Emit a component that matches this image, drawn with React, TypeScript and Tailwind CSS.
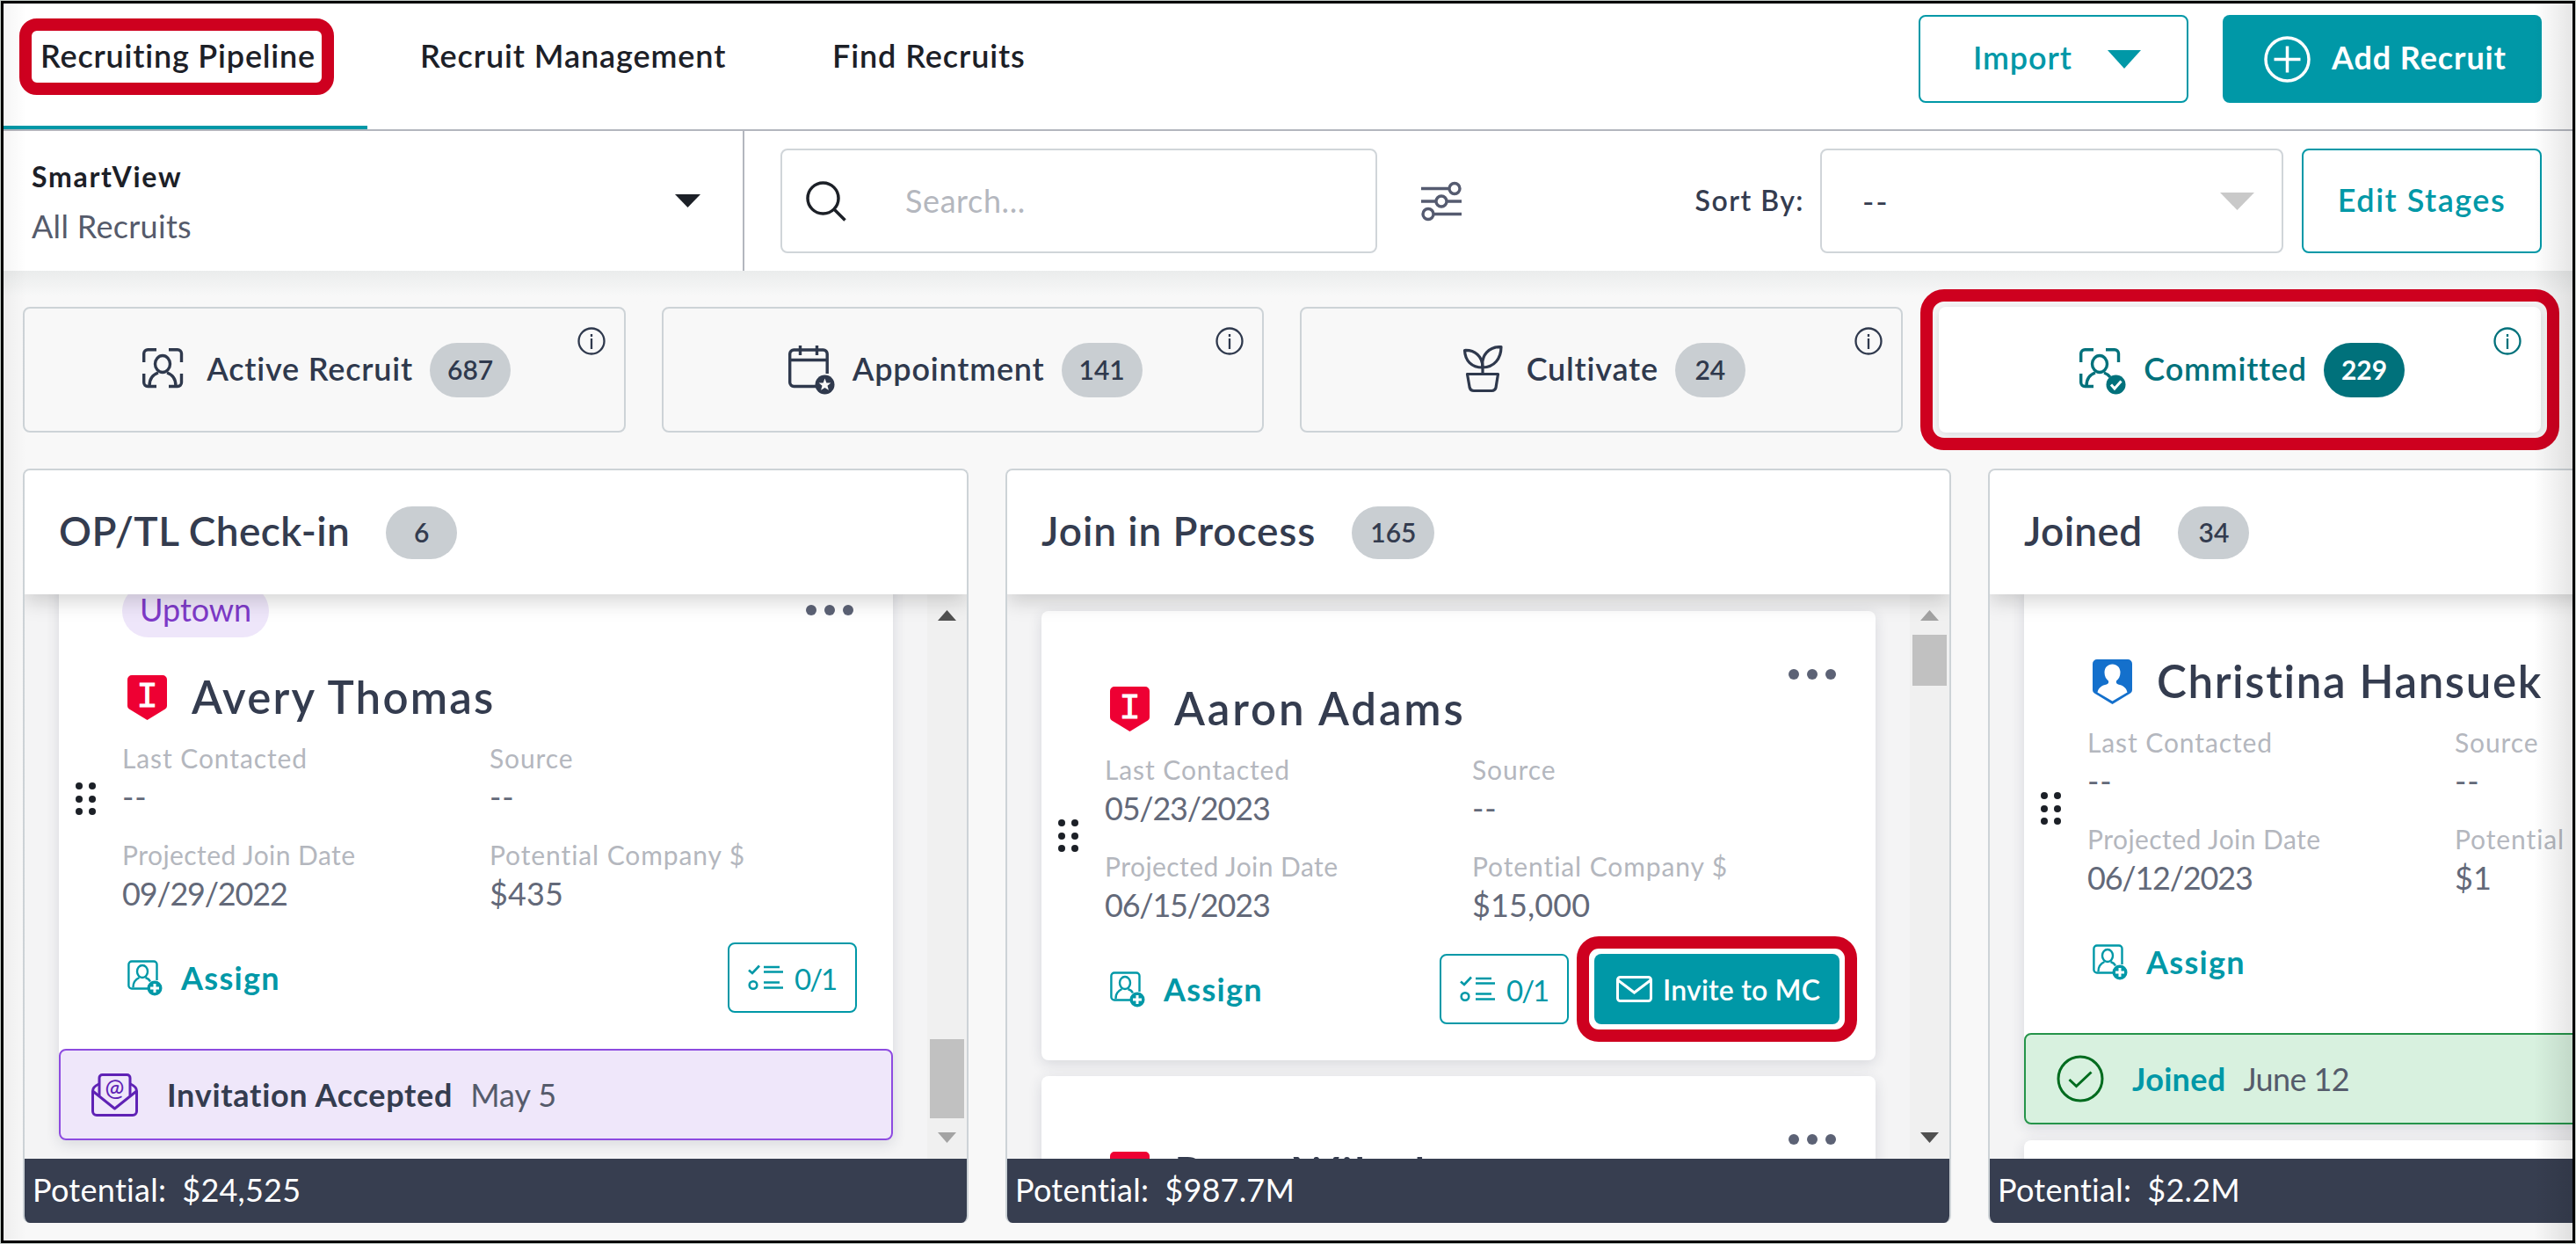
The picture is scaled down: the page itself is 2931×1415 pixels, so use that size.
import type { ReactNode } from "react";
import clsx from "clsx";

interface Recruit {
    name: string;
    nameClass: string;
    kind: "internal" | "contact";
    tag?: string;
    lastContacted: string;
    source: string;
    joinDate: string;
    potential: string;
    checklist?: string;
    canInvite?: boolean;
    status?: "accepted" | "joined";
    statusDate?: string;
}

interface ColumnData {
    title: string;
    titleClass: string;
    count: number;
    total: string;
    listClass: string;
    scroll: "top" | "bottom";
    recruits: Recruit[];
}

const columns: ColumnData[] = [
    {
        title: "OP/TL Check-in",
        titleClass: "tracking-[0.4px]",
        count: 6,
        total: "$24,525",
        listClass: "-mt-[52px]",
        scroll: "bottom",
        recruits: [
            {
                name: "Avery Thomas",
                nameClass: "tracking-[2.2px]",
                kind: "internal",
                tag: "Uptown",
                lastContacted: "--",
                source: "--",
                joinDate: "09/29/2022",
                potential: "$435",
                checklist: "0/1",
                status: "accepted",
                statusDate: "May 5",
            },
        ],
    },
    {
        title: "Join in Process",
        titleClass: "tracking-[0.9px]",
        count: 165,
        total: "$987.7M",
        listClass: "mt-[19px]",
        scroll: "top",
        recruits: [
            {
                name: "Aaron Adams",
                nameClass: "tracking-[2.8px]",
                kind: "internal",
                lastContacted: "05/23/2023",
                source: "--",
                joinDate: "06/15/2023",
                potential: "$15,000",
                checklist: "0/1",
                canInvite: true,
            },
            {
                name: "Ryan Wilsek",
                nameClass: "tracking-[2.2px]",
                kind: "internal",
                lastContacted: "--",
                source: "--",
                joinDate: "--",
                potential: "--",
            },
        ],
    },
    {
        title: "Joined",
        titleClass: "tracking-[0.3px]",
        count: 34,
        total: "$2.2M",
        listClass: "-mt-[12px]",
        scroll: "top",
        recruits: [
            {
                name: "Christina Hansuek",
                nameClass: "tracking-[1.6px]",
                kind: "contact",
                lastContacted: "--",
                source: "--",
                joinDate: "06/12/2023",
                potential: "$1",
                status: "joined",
                statusDate: "June 12",
            },
            {
                name: "Ryan Wilsek",
                nameClass: "tracking-[2.2px]",
                kind: "contact",
                lastContacted: "--",
                source: "--",
                joinDate: "--",
                potential: "--",
            },
        ],
    },
];

function Caret({ className }: { className?: string }) {
    return (
        <svg viewBox="0 0 38 20" preserveAspectRatio="none" className={className}>
            <path d="M0 0H38L19 20Z" fill="currentColor" />
        </svg>
    );
}

function Highlight({ className }: { className: string }) {
    return <div className={clsx("pointer-events-none absolute z-20 border-[14px] border-[#ce001f]", className)} />;
}

function PersonShape() {
    return (
        <>
            <ellipse cx="23" cy="21" rx="8.5" ry="9.5" />
            <path d="M8 46C8 37 12 33 18 31M28 31C34 33 38 37 38 46" />
        </>
    );
}

function ActiveIcon() {
    return (
        <svg viewBox="0 0 53 56" className="h-[56px] w-[53px]" fill="none" stroke="currentColor" strokeWidth="3.4">
            <path d="M1.7 19V9A4.5 4.5 0 0 1 6.2 4.7H16M30 4.7H40A4.5 4.5 0 0 1 44.5 9V19M1.7 32V42A4.5 4.5 0 0 0 6.2 46.5H16M30 46.5H40A4.5 4.5 0 0 0 44.5 42V32" />
            <PersonShape />
        </svg>
    );
}

function CalendarIcon() {
    return (
        <svg viewBox="0 0 53 56" className="h-[56px] w-[53px]" fill="none" stroke="currentColor" strokeWidth="3.4">
            <path d="M32 46.5H6.5A4.5 4.5 0 0 1 1.7 42V9.5A4.5 4.5 0 0 1 6.5 5H39.5A4.5 4.5 0 0 1 44.2 9.5V32M1.7 16.5H44.2M13.5 0V11M32.5 0V11" />
            <circle cx="41.5" cy="44.5" r="11" fill="currentColor" stroke="none" />
            <path
                d="M41.5 37.5L43.4 42.4L48.4 42.6L44.5 45.8L45.9 50.8L41.5 48L37.1 50.8L38.5 45.8L34.6 42.6L39.6 42.4Z"
                fill="#f8f8f8"
                stroke="none"
            />
        </svg>
    );
}

function PlantIcon() {
    return (
        <svg viewBox="-1 0 53 56" className="h-[56px] w-[53px]" fill="none" stroke="currentColor" strokeWidth="3.2" strokeLinejoin="round">
            <path d="M22 25C9 25 2 17 1.5 5.5C13 5 22 12 22 25Z" />
            <path d="M22 25C20 11 29 1 43 1.6C43 15 35 25 22 25ZM22 24V32" />
            <path d="M4.5 32.5H39.5L37 48A5 5 0 0 1 32.5 51.5H12A5 5 0 0 1 7.2 48Z" />
        </svg>
    );
}

function CommittedIcon() {
    return (
        <svg viewBox="0 0 53 56" className="h-[56px] w-[53px]" fill="none" stroke="currentColor" strokeWidth="3.4">
            <path d="M1.7 19V9A4.5 4.5 0 0 1 6.2 4.7H16M30 4.7H40A4.5 4.5 0 0 1 44.5 9V19M1.7 32V42A4.5 4.5 0 0 0 6.2 46.5H16" />
            <ellipse cx="23" cy="21" rx="8.5" ry="9.5" />
            <path d="M8 46C8 37 12 33 18 31M28 31C31 32 33 33.5 35 36" />
            <circle cx="41.5" cy="44.5" r="11" fill="currentColor" stroke="none" />
            <path d="M36 44.5L40 49L47.5 40.5" stroke="#fff" strokeWidth="3" />
        </svg>
    );
}

function InfoIcon() {
    return (
        <svg viewBox="0 0 32 32" className="h-8 w-8" fill="none" stroke="currentColor" strokeWidth="2.3">
            <circle cx="16" cy="16" r="14.5" />
            <path d="M16 13V25M16 8V11" />
        </svg>
    );
}

function AssignIcon() {
    return (
        <svg viewBox="0 0 40 41" className="h-[41px] w-[40px]" fill="none" stroke="currentColor" strokeWidth="2.4">
            <path d="M24 32.5H5A3.5 3.5 0 0 1 1.4 29V5A3.5 3.5 0 0 1 5 1.5H30A3.5 3.5 0 0 1 33.5 5V23" />
            <ellipse cx="17" cy="13" rx="6" ry="7" />
            <path d="M6.5 31C6.5 25 9 22 13.5 20M20.5 20C23.5 21 25 22.5 26 24.5" />
            <circle cx="31" cy="32" r="8.5" fill="currentColor" stroke="none" />
            <path d="M31 27V37M26 32H36" stroke="#fff" strokeWidth="3" />
        </svg>
    );
}

function ChecklistIcon() {
    return (
        <svg viewBox="0 0 40 30" className="h-[30px] w-[40px]" fill="none" stroke="currentColor" strokeWidth="2.6">
            <path d="M1 6.5L5 10L13 1.5M18 3H36M18 8.5H40M18 20.5H36M18 26.5H40" />
            <circle cx="6" cy="23.5" r="4.3" />
        </svg>
    );
}

function MailIcon() {
    return (
        <svg viewBox="0 0 41 30" className="h-[30px] w-[41px]" fill="none" stroke="currentColor" strokeWidth="3">
            <rect x="1.5" y="1.5" width="38" height="27" rx="3" />
            <path d="M2 5L20.5 19L39 5" />
        </svg>
    );
}

function OpenMailIcon() {
    return (
        <svg viewBox="0 0 53 49" className="h-[49px] w-[53px] text-[#5f22b5]" fill="none" stroke="currentColor" strokeWidth="3" strokeLinejoin="round">
            <path d="M9 25V5A3.5 3.5 0 0 1 12.5 1.5H40.5A3.5 3.5 0 0 1 44 5V25" />
            <path d="M8.5 12C4 14 1.5 16 1.5 20V43A4.5 4.5 0 0 0 6 47.5H47A4.5 4.5 0 0 0 51.5 43V20C51.5 16 49 14 44.5 12" />
            <path d="M1.5 20L26.5 40L51.5 20" />
            <text x="26.5" y="25.5" textAnchor="middle" fontFamily="Lato" fontSize="26" fontWeight="500" fill="currentColor" stroke="none">
                @
            </text>
        </svg>
    );
}

function JoinedIcon() {
    return (
        <svg viewBox="0 0 54 54" className="h-[54px] w-[54px] text-[#006b1e]" fill="none" stroke="currentColor" strokeWidth="3">
            <circle cx="27" cy="27" r="25" />
            <path d="M14.5 28L22.5 35.5L39.5 19.5" />
        </svg>
    );
}

function Shield({ kind }: { kind: Recruit["kind"] }) {
    return (
        <svg viewBox="0 0 45 51" className="h-[51px] w-[45px] shrink-0">
            <path
                d="M5 0H40A5 5 0 0 1 45 5V35A4 4 0 0 1 43 38.5L22.5 51L2 38.5A4 4 0 0 1 0 35V5A5 5 0 0 1 5 0Z"
                fill={kind === "internal" ? "#ee0033" : "#1470cc"}
            />
            {kind === "internal" ? (
                <text x="22.5" y="36" textAnchor="middle" fontFamily="Liberation Mono" fontSize="41" fontWeight="400" fill="#fff" stroke="#fff" strokeWidth="0.8">
                    I
                </text>
            ) : (
                <path
                    d="M22.5 5.500C28 5.500 31.500 9.500 31.500 15C31.500 19.500 29.500 22.500 27 24.500C26.500 27.500 27.500 28 31 29C36 30.500 38.500 33 39.500 37.500L22.500 47.500L5.500 37.500C6.500 33 9 30.500 14 29C17.500 28 18.500 27.500 18 24.500C15.500 22.500 13.500 19.500 13.500 15C13.500 9.500 17 5.500 22.500 5.500Z"
                    fill="#fff"
                />
            )}
        </svg>
    );
}

function StageTile({ icon, label, count, active }: { icon: ReactNode; label: string; count: number; active?: boolean }) {
    return (
        <div
            className={clsx(
                "relative flex h-[143px] items-center justify-center rounded-lg pl-[6px]",
                active
                    ? "bg-white text-[#00717b] shadow-[0_2px_12px_rgba(30,40,60,0.16)]"
                    : "border-2 border-[#cdd3d7] bg-[#f8f8f8] text-[#2f394d]"
            )}
        >
            {icon}
            <span className="ml-[20px] pb-[3px] text-[36px] leading-[44px] font-semibold tracking-[0.8px] whitespace-nowrap">{label}</span>
            <span
                className={clsx(
                    "ml-[19px] flex h-[62px] min-w-[80px] items-center justify-center rounded-full px-[20px] pb-[2px] text-[30px] leading-[40px]",
                    active ? "bg-[#00717b] font-bold text-white" : "bg-[#c9ced2] font-semibold"
                )}
            >
                {count}
            </span>
            <span className={clsx("absolute", active ? "top-[23px] right-[22px]" : "top-[21px] right-[21px]")}>
                <InfoIcon />
            </span>
            {active && <Highlight className="-inset-x-[21px] -inset-y-[20px] rounded-[27px]" />}
        </div>
    );
}

function Field({ label, value, isDate }: { label: string; value: string; isDate?: boolean }) {
    return (
        <div className="whitespace-nowrap">
            <div
                className={clsx(
                    "text-[30px] leading-[40px] text-[#b4b7be]",
                    label === "Projected Join Date" ? "tracking-[0.450px]" : "tracking-[0.9px]"
                )}
            >
                {label}
            </div>
            <div
                className={clsx(
                    "mt-[2px] text-[36px] leading-[44px] text-[#636979]",
                    value === "--" ? "tracking-[1px]" : isDate ? "tracking-[-1.2px]" : "tracking-[0.1px]"
                )}
            >
                {value}
            </div>
        </div>
    );
}

function StatusBanner({ status, date }: { status: "accepted" | "joined"; date?: string }) {
    const accepted = status === "accepted";
    return (
        <div
            className={clsx(
                "flex h-[104px] items-center rounded-lg border-[2.5px] pl-[35px] text-[36px] leading-[44px] whitespace-nowrap",
                accepted ? "border-[#8d4be0] bg-[#efe7fa]" : "border-[#25944a] bg-[#d8f1df]"
            )}
        >
            {accepted ? <OpenMailIcon /> : <JoinedIcon />}
            <span
                className={clsx(
                    "font-bold",
                    accepted ? "ml-[33px] tracking-[0.7px] text-[#343c4f]" : "ml-[32px] tracking-[0.3px] text-[#0098a7]"
                )}
            >
                {accepted ? "Invitation Accepted" : "Joined"}
            </span>
            <span className={clsx("ml-[20px] text-[#555b6b]", !accepted && "tracking-[-0.600px]")}>{date}</span>
        </div>
    );
}

function RecruitCard({ recruit }: { recruit: Recruit }) {
    return (
        <div className="shrink-0 rounded-lg bg-white shadow-[0_4px_16px_rgba(40,50,80,0.14)]">
            <div className="flex">
                <div className="flex w-[72px] items-center pl-[19px]">
                    <div className="grid grid-cols-2 gap-x-[7px] gap-y-[6.5px]">
                        {[0, 1, 2, 3, 4, 5].map((dot) => (
                            <span key={dot} className="h-[8px] w-[8px] rounded-full bg-[#1c2027]" />
                        ))}
                    </div>
                </div>
                <div className="flex-1 pt-[41px] pr-[41px] pb-[41px]">
                    <div className="flex justify-between">
                        <div>
                            {recruit.tag && (
                                <div className="flex h-[60px] w-fit items-center rounded-full bg-[#eee6fa] px-[20px] pb-[4px] text-[36px] leading-[44px] text-[#7e3ac8]">
                                    {recruit.tag}
                                </div>
                            )}
                            <div className={clsx("flex h-[56px] items-center pl-[6px]", recruit.tag ? "mt-[40px]" : "mt-[42px]")}>
                                <Shield kind={recruit.kind} />
                                <span
                                    className={clsx(
                                        "ml-[28px] text-[51px] leading-[56px] font-semibold whitespace-nowrap text-[#343c4f]",
                                        recruit.nameClass
                                    )}
                                >
                                    {recruit.name}
                                </span>
                            </div>
                        </div>
                        <div className={clsx("mr-[4px] flex h-[12px] gap-[9px]", recruit.tag ? "mt-[23px]" : "mt-[25px]")}>
                            <span className="h-[12px] w-[12px] rounded-full bg-[#5c6275]" />
                            <span className="h-[12px] w-[12px] rounded-full bg-[#5c6275]" />
                            <span className="h-[12px] w-[12px] rounded-full bg-[#5c6275]" />
                        </div>
                    </div>
                    <div className="mt-[21px] grid grid-cols-[418px_1fr] gap-y-[24px]">
                        <Field label="Last Contacted" value={recruit.lastContacted} isDate />
                        <Field label="Source" value={recruit.source} />
                        <Field label="Projected Join Date" value={recruit.joinDate} isDate />
                        <Field label="Potential Company $" value={recruit.potential} />
                    </div>
                    <div className="mt-[34px] flex h-[80px] items-center pl-[6px] text-[#0098a7]">
                        <AssignIcon />
                        <span className="ml-[21px] text-[36px] leading-[44px] font-bold tracking-[1.3px]">Assign</span>
                        <div className="ml-auto flex gap-[29px]">
                            {recruit.checklist && (
                                <div className="flex h-[80px] w-[147px] items-center rounded-lg border-2 border-[#0098a7] pl-[21px]">
                                    <ChecklistIcon />
                                    <span className="ml-[13px] pt-[2px] text-[33px] leading-[40px] tracking-[-2px]">{recruit.checklist}</span>
                                </div>
                            )}
                            {recruit.canInvite && (
                                <div className="relative flex h-[80px] w-[279px] items-center rounded-lg bg-[#0098a7] pl-[25px] text-white">
                                    <MailIcon />
                                    <span className="ml-[12px] pt-[2px] text-[32px] leading-[40px] font-semibold tracking-[0.2px] whitespace-nowrap">
                                        Invite to MC
                                    </span>
                                    <Highlight className="-inset-5 rounded-[25px]" />
                                </div>
                            )}
                        </div>
                    </div>
                </div>
            </div>
            {recruit.status && <StatusBanner status={recruit.status} date={recruit.statusDate} />}
        </div>
    );
}

function ScrollBar({ position }: { position: "top" | "bottom" }) {
    const atTop = position === "top";
    return (
        <div className="flex w-[45px] flex-col items-center bg-[#f0f0f0] pt-[18px] pb-[18px]">
            <Caret className={clsx("h-[12px] w-[21px] rotate-180", atTop ? "text-[#a3a3a3]" : "text-[#505050]")} />
            <div className={clsx("w-[39px] bg-[#c1c1c1]", atTop ? "mt-[16px] h-[58px]" : "mt-auto mb-[16px] h-[90px]")} />
            <Caret className={clsx("h-[12px] w-[21px]", atTop ? "mt-auto text-[#505050]" : "text-[#a3a3a3]")} />
        </div>
    );
}

function Column({ column }: { column: ColumnData }) {
    return (
        <div className="flex h-[858px] w-[1076px] shrink-0 flex-col overflow-hidden rounded-lg border-2 border-b-0 border-[#cdd3d7] bg-[#f4f4f5]">
            <div className="relative z-10 flex h-[141px] shrink-0 items-center bg-white pl-[39px] text-[#343c4f] shadow-[0_8px_22px_rgba(0,0,0,0.17)]">
                <span className={clsx("pb-[4px] text-[46px] leading-[56px] font-semibold whitespace-nowrap", column.titleClass)}>
                    {column.title}
                </span>
                <span className="ml-[41px] flex h-[60px] min-w-[81px] items-center justify-center rounded-full bg-[#c9ced2] px-[21px] pb-[2px] text-[30px] leading-[40px] font-semibold">
                    {column.count}
                </span>
            </div>
            <div className="flex h-[642px] shrink-0 overflow-hidden">
                <div className="flex-1 pr-[39px] pl-[39px]">
                    <div className={clsx("flex flex-col gap-[18px]", column.listClass)}>
                        {column.recruits.map((recruit) => (
                            <RecruitCard key={recruit.name} recruit={recruit} />
                        ))}
                    </div>
                </div>
                <ScrollBar position={column.scroll} />
            </div>
            <div className="z-10 flex h-[73px] shrink-0 items-center bg-[#373e50] pb-[3px] pl-[9px] text-[36px] leading-[44px] text-white">
                <span className="tracking-[0.3px]">Potential:</span>
                <span className="ml-[18px] tracking-[0.2px]">{column.total}</span>
            </div>
        </div>
    );
}

export default function App() {
    return (
        <div className="h-[1415px] w-[2931px] bg-[#c3cbc7] p-px font-['Lato',sans-serif] [font-variant-ligatures:none]">
            <div className="relative flex h-[1413px] w-[2929px] flex-col overflow-hidden border-[3px] border-black bg-[#f8f8f8]">
                <header className="flex h-[145px] shrink-0 justify-between border-b-2 border-[#b3b6be] bg-white pr-[35px] text-[36px] leading-[44px] font-semibold tracking-[0.9px] text-[#1c2027]">
                    <nav className="flex">
                        <div className="relative w-[414px] border-b-4 border-[#0098a7] pt-[37px] pl-[42px] tracking-[0.8px] whitespace-nowrap">
                            Recruiting Pipeline
                            <Highlight className="top-[17px] left-[18px] h-[87px] w-[358px] rounded-[20px]" />
                        </div>
                        <div className="w-[469px] pt-[37px] pl-[60px]">Recruit Management</div>
                        <div className="pt-[37px] pl-[60px]">Find Recruits</div>
                    </nav>
                    <div className="flex gap-[39px] pt-[13px]">
                        <button className="flex h-[100px] w-[307px] items-center rounded-lg border-2 border-[#0098a7] pl-[60px] text-[#0098a7]">
                            <span className="pb-[4px]">Import</span>
                            <Caret className="ml-[40px] h-[21px] w-[38px]" />
                        </button>
                        <button className="flex h-[100px] w-[363px] items-center rounded-lg bg-[#0098a7] pl-[47px] font-bold text-white">
                            <svg viewBox="0 0 53 53" className="h-[53px] w-[53px]" fill="none" stroke="currentColor" strokeWidth="3.5">
                                <circle cx="26.5" cy="26.5" r="24.5" />
                                <path d="M26.5 11.5V41.5M11.5 26.5H41.5" />
                            </svg>
                            <span className="ml-[24px] pb-[4px]">Add Recruit</span>
                        </button>
                    </div>
                </header>

                <div className="flex h-[159px] shrink-0 bg-white pr-[35px]">
                    <div className="flex w-[843px] items-center justify-between border-r-2 border-[#b3b6be] pr-[48px] pl-[32px]">
                        <div className="pt-px leading-[56px]">
                            <div className="text-[32px] font-bold tracking-[1.7px] text-[#1c2027]">SmartView</div>
                            <div className="text-[36px] tracking-[0.3px] text-[#555b6b]">All Recruits</div>
                        </div>
                        <Caret className="h-[15px] w-[29px] text-[#1c2027]" />
                    </div>
                    <div className="mt-5 ml-[41px] flex h-[119px] w-[679px] items-center rounded-lg border-2 border-[#d0d5d9] pl-[27px]">
                        <svg viewBox="0 0 46 46" className="h-[46px] w-[46px] text-[#1c2027]" fill="none" stroke="currentColor" strokeWidth="3.5">
                            <circle cx="19.5" cy="19.5" r="17.5" />
                            <path d="M32 32L44.5 44.5" />
                        </svg>
                        <span className="ml-[67px] pb-px text-[36px] leading-[44px] tracking-[0.6px] text-[#b4b7be]">Search...</span>
                    </div>
                    <svg viewBox="0 0 46 46" className="mt-[57px] ml-[50px] h-[46px] w-[46px] text-[#555b70]" fill="none" stroke="currentColor" strokeWidth="3.4">
                        <path d="M0 8.5H31M0 23H16M30 23H46M14 37.5H46" />
                        <circle cx="38" cy="8.5" r="6" />
                        <circle cx="23" cy="23" r="6" />
                        <circle cx="8" cy="37.5" r="6" />
                    </svg>
                    <div className="mt-5 ml-auto flex h-[119px] items-center">
                        <span className="pb-px text-[32px] leading-[40px] font-semibold tracking-[1.5px] text-[#343c4f]">Sort By:</span>
                        <div className="ml-[18px] flex h-[119px] w-[527px] items-center justify-between rounded-lg border-2 border-[#d0d5d9] pr-[31px] pl-[46px]">
                            <span className="text-[36px] leading-[44px] tracking-[2px] text-[#343c4f]">--</span>
                            <Caret className="h-[20px] w-[39px] text-[#c9c9c9]" />
                        </div>
                        <button className="ml-[21px] flex h-[119px] w-[273px] items-center justify-center rounded-lg border-2 border-[#0098a7] pb-[4px] text-[36px] leading-[44px] font-semibold tracking-[1.500px] text-[#0098a7]">
                            Edit Stages
                        </button>
                    </div>
                </div>

                <div className="h-[41px] shrink-0 bg-linear-to-b from-[#eaecec] to-[#f8f8f8] to-70%" />

                <div className="grid shrink-0 grid-cols-4 gap-[41px] pr-[36px] pl-[22px]">
                    <StageTile icon={<ActiveIcon />} label="Active Recruit" count={687} />
                    <StageTile icon={<CalendarIcon />} label="Appointment" count={141} />
                    <StageTile icon={<PlantIcon />} label="Cultivate" count={24} />
                    <StageTile icon={<CommittedIcon />} label="Committed" count={229} active />
                </div>

                <main className="mt-[41px] flex gap-[42px] pl-[22px]">
                    {columns.map((column) => (
                        <Column key={column.title} column={column} />
                    ))}
                </main>

                <div className="pointer-events-none absolute inset-y-0 right-0 z-30 w-[44px] bg-linear-to-r from-transparent to-black/10" />
                <div className="pointer-events-none absolute inset-y-0 left-0 z-30 w-[26px] bg-linear-to-r from-black/4 to-transparent" />
            </div>
        </div>
    );
}
